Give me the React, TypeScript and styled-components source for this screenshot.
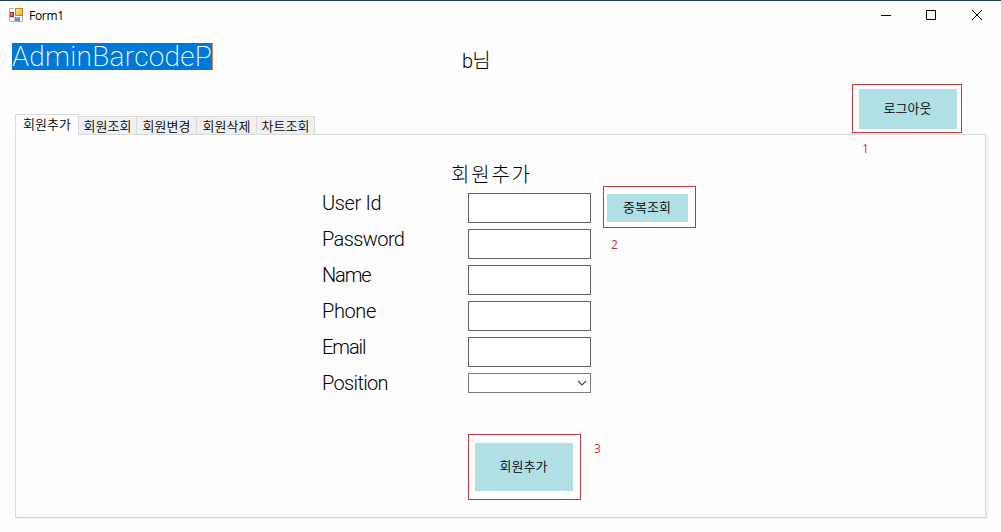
import React from "react";
import styled, { createGlobalStyle } from "styled-components";

const GlobalStyle = createGlobalStyle`
  * { box-sizing: border-box; }
  body { margin: 0; background: #fefefe; overflow: hidden; }
`;

const Window = styled.div`
  width: 1001px;
  height: 532px;
  display: flex;
  flex-direction: column;
  background: #fefefe;
  border-top: 1px solid #1d3b5a;
  color: #000;
  font-family: Roboto, "Noto Sans CJK KR", sans-serif;
`;

const TitleBar = styled.header`
  height: 29px;
  display: flex;
  align-items: center;
  padding: 0 18px 1px 9px;
`;

const WindowTitle = styled.span`
  flex: 1;
  margin-left: 6px;
  padding-top: 2px;
  font: 400 12px/16px "Open Sans", "Noto Sans", sans-serif;
  letter-spacing: -0.3px;
`;

const Controls = styled.div`
  display: flex;
  gap: 34px;
`;

const Header = styled.div`
  height: 84px;
  display: flex;
  align-items: flex-start;
  padding: 13px 44px 0 12px;
`;

const Selected = styled.div`
  width: 201px;
  height: 27px;
  background: #0078d7;
  border-right: 1px solid #d98a4a;
  color: #fff;
  font-size: 28px;
  font-weight: 200;
  line-height: 28px;
  letter-spacing: 0.3px;
  white-space: nowrap;
`;

const UserName = styled.div`
  margin: 6px 0 0 249px;
  flex: 1;
  font-size: 20px;
  font-weight: 300;
  line-height: 24px;
  letter-spacing: -0.8px;
`;

const Annotated = styled.div<{ $top?: number; $left?: number }>`
  position: relative;
  display: flex;
  align-self: flex-start;
  margin-top: ${(p) => p.$top ?? 0}px;
  margin-left: ${(p) => p.$left ?? 0}px;
`;

const Frame = styled.span<{ $inset: string }>`
  position: absolute;
  inset: ${(p) => p.$inset};
  border: 1px solid #c4363c;
  pointer-events: none;
`;

const Mark = styled.span<{ $x: number; $y: number }>`
  position: absolute;
  left: ${(p) => p.$x}px;
  top: ${(p) => p.$y}px;
  color: #cf3036;
  font: 400 12px/14px "Open Sans", "Noto Sans", sans-serif;
`;

const Button = styled.button<{ $w: number; $h: number }>`
  width: ${(p) => p.$w}px;
  height: ${(p) => p.$h}px;
  padding: 0 1px 2px 0;
  border: 0;
  background: #b0e0e6;
  color: #000;
  font: 350 13px/16px "Noto Sans CJK KR", sans-serif;
  letter-spacing: 0.1px;
`;

const Tabs = styled.nav`
  height: 21px;
  margin-left: 15px;
  display: flex;
  align-items: flex-end;
  position: relative;
  z-index: 1;
`;

const Tab = styled.div<{ $w: number; $active?: boolean }>`
  width: ${(p) => p.$w}px;
  height: ${(p) => (p.$active ? 21 : 18)}px;
  margin-bottom: ${(p) => (p.$active ? 0 : 1)}px;
  border: 1px solid #dadada;
  border-bottom: 0;
  border-left-width: ${(p) => (p.$active ? 1 : 0)}px;
  background: ${(p) => (p.$active ? "#fefefe" : "#f0f0f0")};
  text-align: center;
  font: 350 13px/17px "Noto Sans CJK KR", sans-serif;
  white-space: nowrap;
`;

const Panel = styled.main`
  width: 971px;
  height: 384px;
  margin: -1px 0 0 15px;
  padding: 25px 0 0 306px;
  border: 1px solid #d9d9d9;
  box-shadow: 2px 1px 0 #f0f0f0;
`;

const FormTitle = styled.h1`
  height: 33px;
  margin: 0 0 0 129px;
  font: 300 20px/28px "Noto Sans CJK KR", sans-serif;
  letter-spacing: 1.8px;
`;

const Row = styled.div`
  display: flex;
  height: 36px;
`;

const Label = styled.label<{ $spacing: number }>`
  width: 146px;
  font-size: 20px;
  font-weight: 300;
  line-height: 20px;
  letter-spacing: ${(p) => p.$spacing}px;
`;

const Input = styled.input`
  width: 123px;
  height: 30px;
  border: 1px solid #646464;
  background: #fff;
  outline: none;
`;

const Select = styled.div`
  width: 123px;
  height: 20px;
  display: flex;
  align-items: center;
  justify-content: flex-end;
  padding-right: 3px;
  border: 1px solid #7a7a7a;
  background: #fff;
`;

const AppIcon = () => (
  <svg width="14" height="14" viewBox="0 0 14 14">
    <defs>
      <linearGradient id="gold" x2="1" y2="1">
        <stop stopColor="#fff0a0" />
        <stop offset="1" stopColor="#e8ac10" />
      </linearGradient>
    </defs>
    <path d="M0 .5h5M.5 0v13.5H13.5V8" fill="none" stroke="#b5b5b5" />
    <path d="M5.5 9v4M1 9.5h4" stroke="#cfcfcf" />
    <rect x="6.5" y=".5" width="7" height="7" fill="url(#gold)" stroke="#b88a28" />
    <rect x="1" y="4" width="4" height="5" fill="#b82a20" />
    <rect x="2" y="5" width="1.5" height="2.5" fill="#f0a090" />
    <rect x="6" y="9" width="5" height="4" fill="#5a8be0" />
    <rect x="7" y="9" width="3" height="1.5" fill="#8db2f0" />
  </svg>
);

const ControlIcon = ({ d }: { d: string }) => (
  <svg width="12" height="12" viewBox="0 0 12 12" fill="none" stroke="#000">
    <path d={d} />
  </svg>
);

const tabs: [string, number][] = [
  ["회원조회", 58],
  ["회원변경", 60],
  ["회원삭제", 60],
  ["차트조회", 58],
];

const fields: [string, number][] = [
  ["User Id", -0.35],
  ["Password", -0.6],
  ["Name", -1.1],
  ["Phone", -0.4],
  ["Email", -1.1],
];

export default function App() {
  return (
    <Window>
      <GlobalStyle />
      <TitleBar>
        <AppIcon />
        <WindowTitle>Form1</WindowTitle>
        <Controls>
          <ControlIcon d="M2 6.5h10" />
          <ControlIcon d="M1.5 1.5h9v9h-9z" />
          <ControlIcon d="M1 1l10 10M11 1L1 11" />
        </Controls>
      </TitleBar>
      <Header>
        <Selected>AdminBarcodeP</Selected>
        <UserName>b님</UserName>
        <Annotated $top={46}>
          <Button $w={98} $h={40}>로그아웃</Button>
          <Frame $inset="-5px -5px -4px -7px" />
          <Mark $x={3} $y={53}>1</Mark>
        </Annotated>
      </Header>
      <Tabs>
        <Tab $w={64} $active>회원추가</Tab>
        {tabs.map(([name, width]) => (
          <Tab key={name} $w={width}>{name}</Tab>
        ))}
      </Tabs>
      <Panel>
        <FormTitle>회원추가</FormTitle>
        {fields.map(([name, spacing], i) => (
          <Row key={name}>
            <Label $spacing={spacing}>{name}</Label>
            <Input aria-label={name} />
            {i === 0 && (
              <Annotated $top={1} $left={16}>
                <Button $w={81} $h={28}>중복조회</Button>
                <Frame $inset="-8px -8px -6px -4px" />
                <Mark $x={4} $y={44}>2</Mark>
              </Annotated>
            )}
          </Row>
        ))}
        <Row>
          <Label $spacing={-0.65}>Position</Label>
          <Select>
            <svg width="10" height="8" viewBox="0 0 10 8" fill="none" stroke="#444" strokeWidth="1.1">
              <path d="M1 2l4 4 4-4" />
            </svg>
          </Select>
        </Row>
        <Row>
          <Annotated $top={34} $left={153}>
            <Button $w={98} $h={48}>회원추가</Button>
            <Frame $inset="-9px -8px -9px -7px" />
            <Mark $x={119} $y={-1}>3</Mark>
          </Annotated>
        </Row>
      </Panel>
    </Window>
  );
}
